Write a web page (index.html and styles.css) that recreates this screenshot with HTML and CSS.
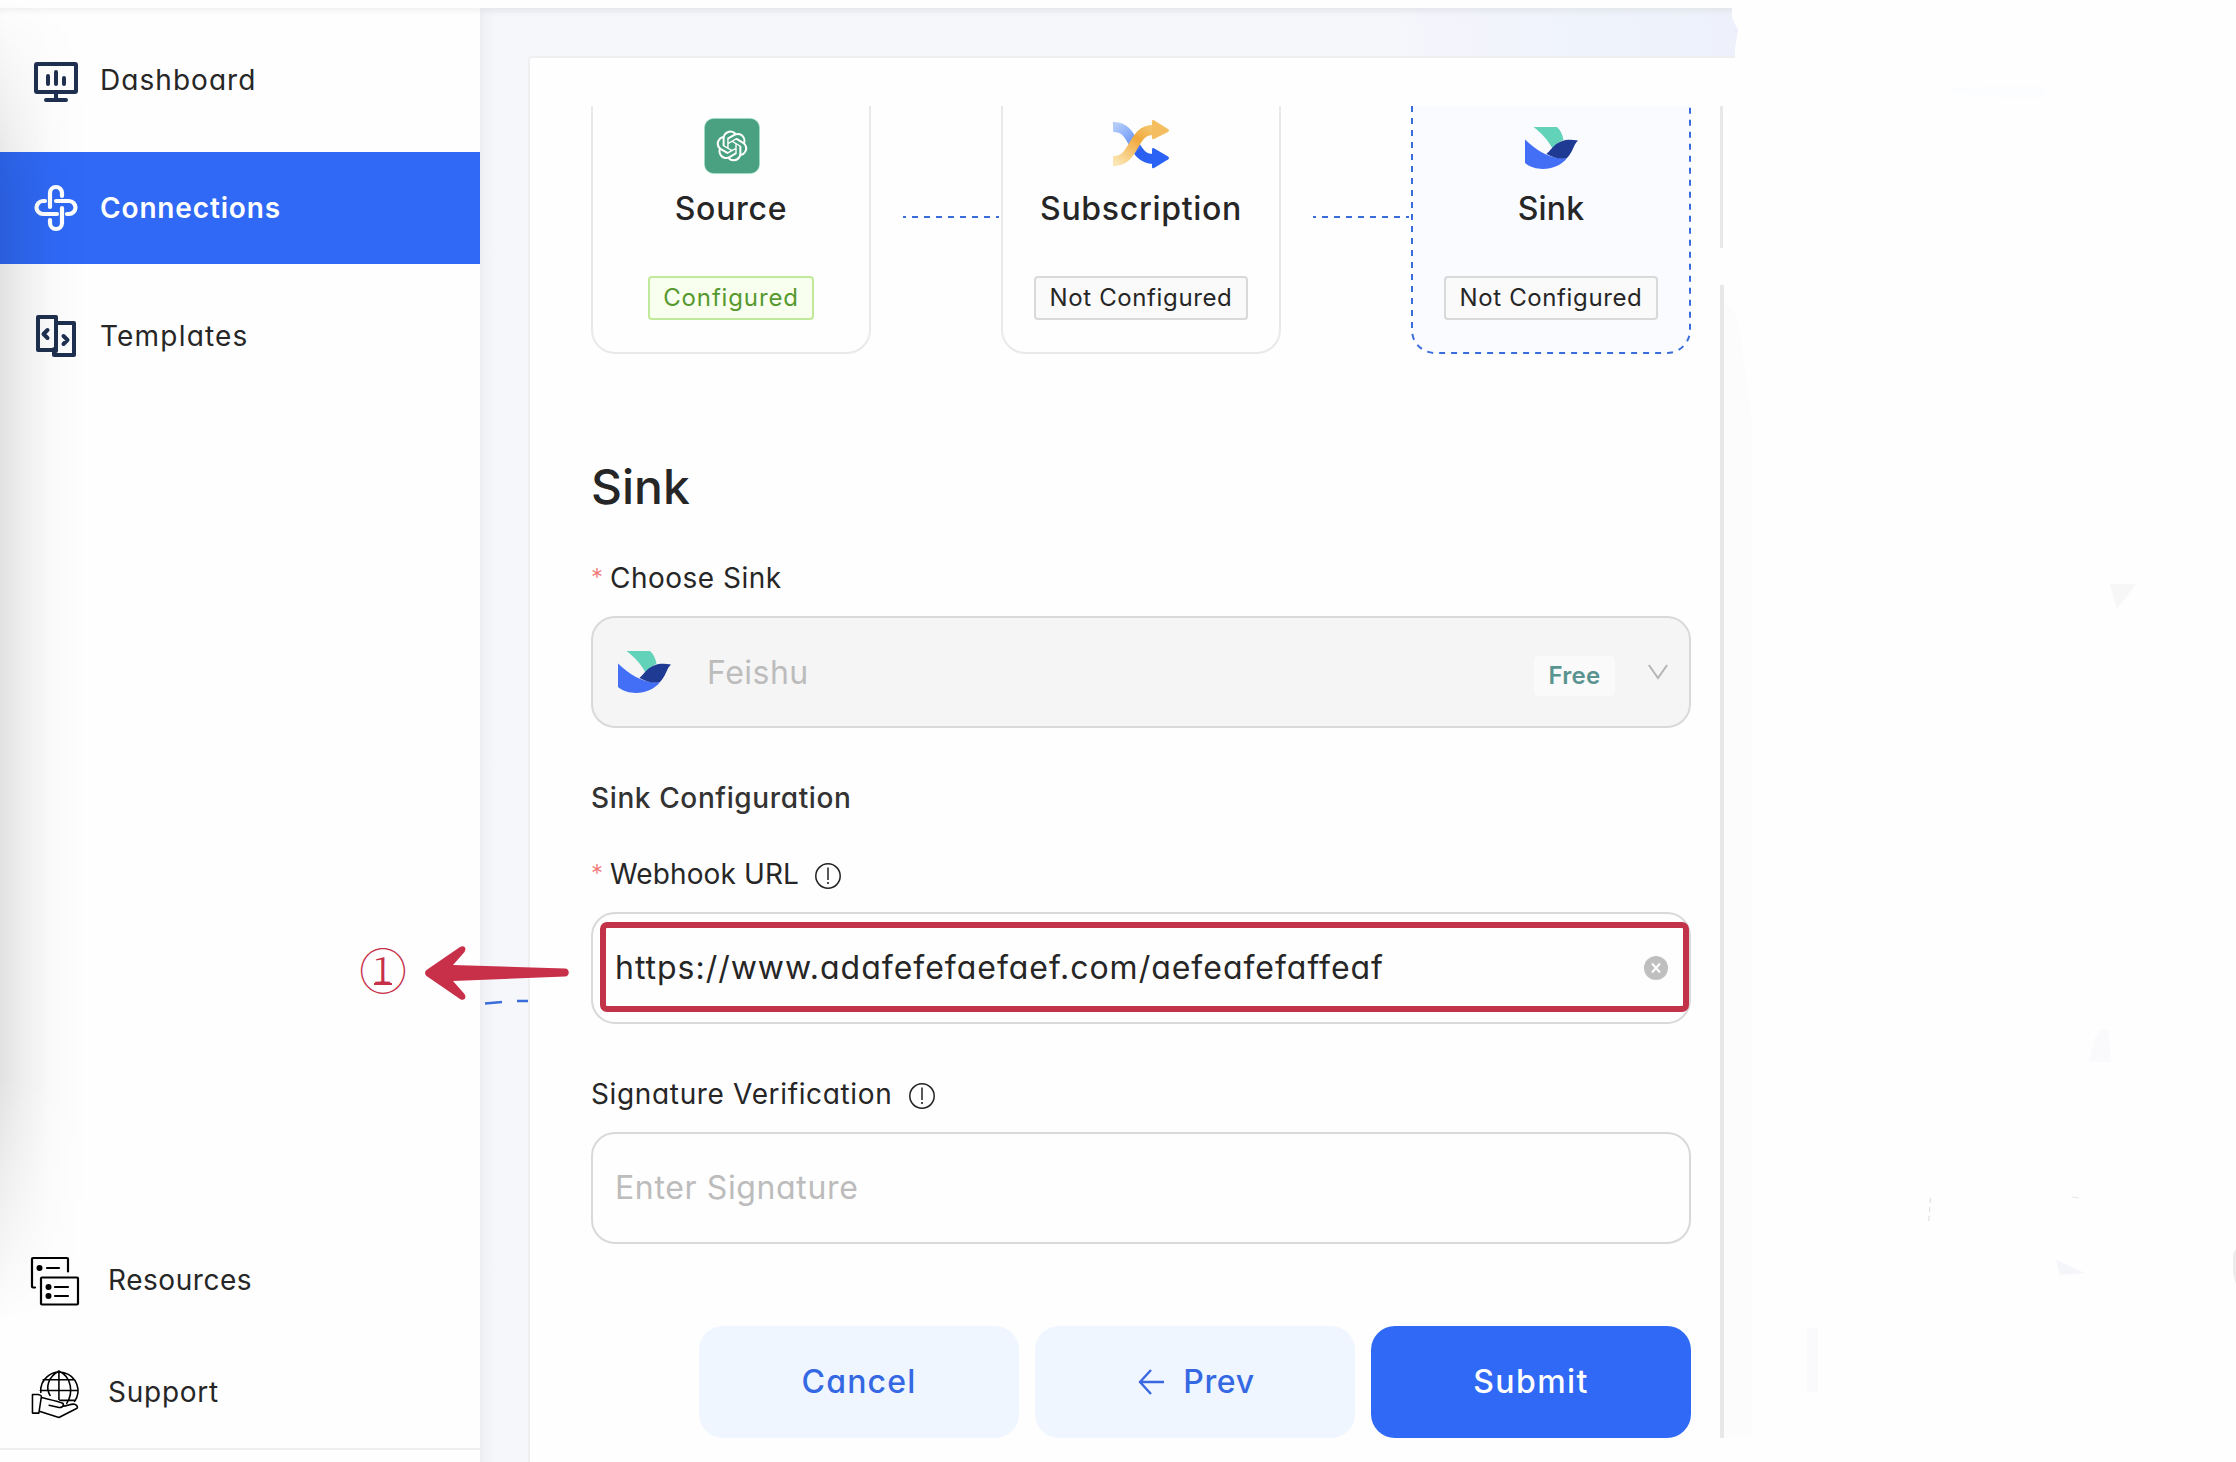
FILE: index.html
```html
<!DOCTYPE html>
<html lang="en">
<head>
<meta charset="utf-8">
<title>Connections</title>
<link rel="stylesheet" href="styles.css">
</head>
<body>
<svg class="defs" width="0" height="0">
  <symbol id="feishu" viewBox="0 0 53 42">
    <path fill="#62d2b9" d="M8.500 0H32c3.500 3 5.700 8 6.500 13C33 15 30 19 27.500 21.500 22.500 12.500 16.500 6 8.500 0z"/>
    <path fill="#426ff6" d="M0 12.500C12 24 26 33 42 31 34 42 13 46.500 0 36z"/>
    <path fill="#1f3a93" d="M21.500 27C29 20 33 10 53 13.500 48.500 17.500 48 25 42 31c-8 1.500-14-.5-20.500-4z"/>
  </symbol>
  <symbol id="info" viewBox="0 0 26 26">
    <circle cx="13" cy="13" r="12.200" fill="none" stroke="#222" stroke-width="1.500"/>
    <path d="M13 4.500v12.500" stroke="#222" stroke-width="1.500"/><circle cx="13" cy="20" r="1.100" fill="#222"/>
  </symbol>
</svg>
<div class="topbar"></div>
<div class="shell">
  <aside class="sidebar">
    <nav class="nav">
      <a class="nav-item"><svg class="nav-icon monitor" viewBox="0 0 44 48" fill="none" stroke="#1f3050" stroke-width="4" stroke-linecap="round" stroke-linejoin="round"><rect x="2" y="6" width="40" height="28" rx="1"/><path d="M14 18v8M22 14v12M30 20v6M22 34v8M12 42h20"/></svg><span class="t-dashboard">Dashboard</span></a>
      <a class="nav-item active"><svg class="nav-icon" viewBox="0 0 44 48" fill="none" stroke="#fff" stroke-width="4.200" stroke-linecap="round"><path d="M28 12V9a6 6 0 0 0-12 0v14M11 17H9a6.500 6.500 0 0 0 0 13h14M16 36v3a6 6 0 0 0 12 0V24M33 30h2a6.500 6.500 0 0 0 0-13H22"/></svg><span class="t-connections">Connections</span></a>
      <a class="nav-item"><svg class="nav-icon" viewBox="0 0 44 48" fill="none" stroke="#1f3050" stroke-width="4" stroke-linejoin="round" stroke-linecap="round"><path d="M20 38H4V5h18v34M22 11h18v32H20V37M13.500 18l-4 4 4 4M29.500 24l4 4-4 4"/></svg><span class="t-templates">Templates</span></a>
    </nav>
    <nav class="nav nav-bottom">
      <a class="nav-item"><svg class="nav-icon wide" viewBox="0 0 48 48" fill="none" stroke="#000" stroke-width="2.200" stroke-linecap="round" stroke-linejoin="round"><path d="M37 14V1.500q0-1-1-1H2q-1 0-1 1V29q0 1 1 1h2"/><rect x="10" y="20" width="37" height="27" rx="1"/><path d="M16 10.500h12M24 29.500h13M24 38.500h13"/><g fill="#000" stroke="none"><circle cx="8.500" cy="10.500" r="3"/><circle cx="17.500" cy="29.500" r="3"/><circle cx="17.500" cy="38.500" r="3"/></g></svg><span class="t-resources">Resources</span></a>
      <a class="nav-item"><svg class="nav-icon wide" viewBox="0 0 48 50" fill="none" stroke="#000" stroke-width="1.600" stroke-linecap="round" stroke-linejoin="round"><path d="M9.500 24A19 19 0 1 1 44 33M28 2v29M19 27C14 19 17 8 28 2M36 35C43 24 41 8 28 2M12 11h32M9 22h38M29 32h16"/><path d="M1 26h6q4 1 3 3L7.500 45H1zM10 29c8 2 18 4 22 6 2 3-2 5-5 4l-9-2M32 38c5 0 8-3 12-2q4 2 2.500 4L28 49.500 8 43"/></svg><span class="t-support">Support</span></a>
    </nav>
  </aside>
  <main class="page">
    <section class="panel">
      <div class="steps">
        <div class="step">
          <svg class="step-icon source" viewBox="0 0 56 56"><rect x=".5" y=".5" width="55" height="55" rx="9" fill="#4aa181" stroke="#9fe0c6" stroke-width=".6"/><g transform="translate(12.600 12.600) scale(1.280)"><path fill="#fff" d="M22.282 9.821a5.985 5.985 0 0 0-.516-4.910 6.046 6.046 0 0 0-6.510-2.900A6.065 6.065 0 0 0 4.981 4.182a5.985 5.985 0 0 0-3.998 2.900 6.046 6.046 0 0 0 .743 7.097 5.980 5.980 0 0 0 .510 4.911 6.051 6.051 0 0 0 6.515 2.900A5.985 5.985 0 0 0 13.260 24a6.056 6.056 0 0 0 5.772-4.206 5.990 5.990 0 0 0 3.998-2.900 6.056 6.056 0 0 0-.748-7.073zM13.260 22.430a4.476 4.476 0 0 1-2.876-1.041l.141-.080 4.779-2.759a.795.795 0 0 0 .393-.681v-6.737l2.020 1.169a.071.071 0 0 1 .038.052v5.583a4.504 4.504 0 0 1-4.495 4.494zM3.600 18.304a4.471 4.471 0 0 1-.535-3.014l.142.085 4.783 2.759a.771.771 0 0 0 .781 0l5.843-3.369v2.332a.080.080 0 0 1-.033.062L9.740 19.950a4.500 4.500 0 0 1-6.140-1.646zM2.341 7.896a4.485 4.485 0 0 1 2.366-1.973V11.600a.766.766 0 0 0 .388.677l5.815 3.354-2.020 1.169a.076.076 0 0 1-.071 0l-4.830-2.787A4.504 4.504 0 0 1 2.341 7.872zm16.597 3.855l-5.833-3.387L15.119 7.200a.076.076 0 0 1 .071 0l4.830 2.791a4.494 4.494 0 0 1-.676 8.105v-5.678a.790.790 0 0 0-.407-.667zm2.010-3.023l-.141-.085-4.774-2.782a.776.776 0 0 0-.785 0L9.409 9.230V6.897a.066.066 0 0 1 .028-.061l4.830-2.787a4.499 4.499 0 0 1 6.680 4.660zm-12.640 4.135l-2.020-1.164a.080.080 0 0 1-.038-.057V6.075a4.499 4.499 0 0 1 7.375-3.453l-.142.080L8.704 5.460a.795.795 0 0 0-.393.681zm1.097-2.365l2.602-1.500 2.607 1.500v2.999l-2.597 1.500-2.607-1.500z"/></g></svg>
          <h3>Source</h3><span class="tag ok"><span>Configured</span></span>
        </div>
        <div class="link"></div>
        <div class="step">
          <svg class="step-icon" viewBox="0 0 56 56"><defs><linearGradient id="b" x1="0" y1="0" x2="1" y2="1"><stop offset="0" stop-color="#b3ccfa"/><stop offset=".5" stop-color="#6c97f8"/><stop offset=".7" stop-color="#2a5ff0"/><stop offset="1" stop-color="#2a62f5"/></linearGradient><linearGradient id="y" x1="0" y1="1" x2="1" y2="0"><stop offset="0" stop-color="#fbe6b4"/><stop offset=".65" stop-color="#f1a93c"/><stop offset="1" stop-color="#f4c46c"/></linearGradient></defs><path d="M0 9C23 8 18 42 41 41" fill="none" stroke="url(#b)" stroke-width="10"/><path d="M39 31.500q0-2 2-1.200L55 38.500q2 1.500 0 3L41 50q-2 .8-2-1z" fill="#2a62f5"/><path d="M0 43C23 44 18 11 41 12" fill="none" stroke="url(#y)" stroke-width="10"/><path d="M39 3.500q0-2 2-1.200L55 11q2 1.500 0 3L41 21q-2 .8-2-1z" fill="#f4be60"/></svg>
          <h3>Subscription</h3><span class="tag"><span>Not Configured</span></span>
        </div>
        <div class="link"></div>
        <div class="step current">
          <svg class="dash" viewBox="0 0 280 248"><path d="M1 0V224a23 23 0 0 0 23 23H256a23 23 0 0 0 23-23V0" fill="#f9fbff" stroke="#3a6ddc" stroke-width="2" stroke-dasharray="6 6"/></svg>
          <svg class="step-icon sink"><use href="#feishu"/></svg>
          <h3 class="t-sink">Sink</h3><span class="tag"><span>Not Configured</span></span>
        </div>
      </div>
      <h1>Sink</h1>
      <div class="label"><i class="req">*</i><span class="t-choose">Choose Sink</span></div>
      <div class="field select"><svg class="brand"><use href="#feishu"/></svg><span class="ph">Feishu</span><span class="free">Free</span><svg class="chev" viewBox="0 0 20 16"><path d="M.8 1L10 14 19.200 1" fill="none" stroke="#b5b5b5" stroke-width="2"/></svg></div>
      <h2>Sink Configuration</h2>
      <div class="label second"><i class="req">*</i><span class="t-webhook">Webhook URL</span><svg class="info"><use href="#info"/></svg></div>
      <div class="field url"><span class="t-url">https://www.adafefefaefaef.com/aefeafefaffeaf</span><svg class="clear" viewBox="0 0 24 24"><circle cx="12" cy="12" r="12" fill="#bfbfbf"/><path d="M8 7.500l8 9M16 7.500l-8 9" stroke="#fff" stroke-width="2"/></svg><div class="marker"></div></div>
      <div class="label third"><span class="t-signature">Signature Verification</span><svg class="info"><use href="#info"/></svg></div>
      <div class="field"><span class="ph t-enter">Enter Signature</span></div>
      <div class="actions">
        <button><span class="t-cancel">Cancel</span></button>
        <button><svg class="back" viewBox="0 0 26 26"><path d="M13 1L2 13l11 12M2 13h24" fill="none" stroke="#3a68e0" stroke-width="2.400"/></svg><span class="t-prev">Prev</span></button>
        <button class="primary"><span class="t-submit">Submit</span></button>
      </div>
      <div class="rail"><i class="rail-top"></i><i class="rail-rest"></i></div>
    </section>
  </main>
</div>
<div class="edge-shadow"></div>
<div class="callout">①</div>
<svg class="arrow" viewBox="0 0 230 70"><path d="M1.500 30q-3-3 0-6L35 1c4-2.500 7 1 4.500 5L28 19l112 3.500c5 0 5 8 0 8L28 35l11.500 13c2.500 4-.5 7.500-4.500 5z" fill="#c8304a"/><path d="M60 57.500l17-1.500M92 55h11" stroke="#3a6ddc" stroke-width="2.400" fill="none"/></svg>
<svg class="specks" viewBox="0 0 536 1462"><path d="M24 1437V300l14 20 14 100v1017z" fill="#fcfcfc"/><path d="M240 90l40-4h65v12h-45z" fill="#fcfdff"/><path d="M410 584h26l-19 25z" fill="#f7f7f8"/><path d="M389 1060l6-22q6-14 14-6l2 30h-20z" fill="#fafafd"/><path d="M107 1328h11v64h-11z" fill="#fafafc"/><path d="M230.500 1198l-2 26" stroke="#dcdcdc" stroke-dasharray="5 4"/><path d="M372 1197l7 1" stroke="#e8e8e8"/><path d="M356 1260l29 13-25 2z" fill="#f4f6fa"/><path d="M536 1249l-3 5v20l3 10z" fill="#ececec"/></svg>
</body>
</html>
```

FILE: styles.css
```css
* { box-sizing: border-box; margin: 0; padding: 0; }
body { width: 2236px; height: 1462px; overflow: hidden; position: relative; background: #fefefe; color: #262626; font: 400 28px/42px Inter, "Liberation Sans", sans-serif; font-feature-settings: "cv11", "ss03"; }
h1, h2, h3 { font-weight: 500; }
.defs { position: absolute; }
.topbar { height: 8px; background: #fefefe; }
.shell { display: flex; height: 1454px; }
.sidebar { width: 480px; display: flex; flex-direction: column; justify-content: space-between; background: #fefefe; box-shadow: inset 0 6px 6px -4px #eee; padding-top: 16px; }
.nav { display: flex; flex-direction: column; gap: 16px; }
.nav-item { display: flex; align-items: center; height: 112px; padding-left: 34px; gap: 22px; }
.nav-icon { width: 44px; height: 48px; }
.nav-icon.monitor { margin-top: 3px; }
.nav-item.active { background: #2f69f6; color: #fff; font-weight: 600; }
.nav-bottom { gap: 0; height: 238px; background: linear-gradient(#efefef, #efefef) 0 224px / 100% 2px no-repeat; }
.nav-bottom .nav-item { padding-left: 32px; gap: 28px; }
.nav-icon.wide { width: 48px; height: 49px; margin: 3px 1px 0 -1px; overflow: visible; }
.t-dashboard { letter-spacing: 1.05px; }
.t-connections { letter-spacing: .85px; }
.t-templates { letter-spacing: 1.2px; }
.t-resources { letter-spacing: .55px; }
.t-support { letter-spacing: .75px; }
.page { width: 1258px; padding: 48px 0 0 48px; background: linear-gradient(90deg, #efeff2 0, #f2f3f7 6px, #f5f7fb 16px, #f5f7fb 73%, #f4f4fc 77%, #eff3fc 87%, #eef1fb); clip-path: polygon(0 0, 1252px 0, 1252px 10px, 1258px 22px, 1255px 40px, 1255px 50px, 1258px 60px, 1258px 100%, 0 100%); box-shadow: inset 0 6px 6px -3px #e2e4ea; }
.panel { position: relative; height: 1406px; background: #fefefe; border: 2px solid #efeff1; border-right: 0; border-bottom: 0; border-radius: 4px 0 0 0; padding: 48px 47px 0 61px; }
.steps { display: flex; height: 248px; }
.step { position: relative; width: 280px; display: flex; flex-direction: column; align-items: center; border: 2px solid #e9e9e9; border-top: 0; border-radius: 0 0 24px 24px; }
.step.current { border-color: transparent; }
.dash { position: absolute; left: -2px; top: 0; width: 280px; height: 248px; }
.step-icon { position: relative; width: 56px; height: 56px; margin-top: 12px; }
.step-icon.source { margin-left: 2px; }
.step-icon.sink { width: 53px; height: 42px; margin: 21px 0 5px; }
.step h3 { position: relative; font-size: 32px; line-height: 48px; margin-top: 11px; letter-spacing: .7px; }
.step h3.t-sink { letter-spacing: .2px; }
.tag { position: relative; height: 44px; width: 214px; margin-top: 43px; display: flex; align-items: center; justify-content: center; border: 2px solid #d9d9d9; border-radius: 4px; background: #fafafa; font-size: 24px; letter-spacing: .62px; }
.tag.ok { width: 166px; color: #56992f; background: #f9ffef; border-color: #c0ea99; letter-spacing: .85px; }
.link { width: 96px; height: 2px; margin: 110px 2px 0 32px; background: repeating-linear-gradient(90deg, #3a6ddc 0 6px, transparent 6px 12px) -3px 0; }
h1 { font-size: 48px; line-height: 64px; margin-top: 101px; }
.label { display: flex; align-items: center; height: 42px; margin: 38px 0 17px; }
.req { width: 19px; color: #f07673; font: 300 24px/42px Inter, sans-serif; }
.info { width: 26px; height: 26px; margin: 3px 0 0 17px; }
.second .info { margin-left: 16px; }
.field { position: relative; width: 1100px; height: 112px; display: flex; align-items: center; border: 2px solid #d9d9d9; border-radius: 24px; padding: 0 22px; font-size: 32px; background: #fefefe; }
.select { background: #f5f5f5; padding-left: 25px; }
.brand { width: 53px; height: 42px; }
.ph { color: #bcbcbc; }
.select .ph { margin: 1px 0 0 36px; letter-spacing: .5px; }
.free { margin: 8px 0 0 auto; width: 81px; height: 40px; display: flex; align-items: center; justify-content: center; border-radius: 5px; background: #fafafa; color: #5a9490; font-size: 24px; font-weight: 600; letter-spacing: .3px; }
.chev { width: 20px; height: 16px; margin: 0 -1px 0 33px; }
h2 { font-size: 28px; line-height: 42px; margin-top: 49px; color: #333; letter-spacing: .62px; }
.t-choose { letter-spacing: .5px; }
.label.second { margin: 34px 0 17px; }
.t-webhook { letter-spacing: .12px; }
.t-url { letter-spacing: .98px; }
.label.third { margin: 49px 0 17px; }
.t-signature { letter-spacing: .65px; }
.t-enter { letter-spacing: .63px; }
.url { padding-right: 21px; }
.clear { width: 24px; height: 24px; margin-left: auto; }
.marker { position: absolute; left: 7px; top: 8px; width: 1089px; height: 90px; border: 6px solid #c23249; border-radius: 7px; }
.actions { display: flex; gap: 16px; margin: 82px 0 0 108px; }
button { width: 320px; height: 112px; display: flex; align-items: center; justify-content: center; border: 0; border-radius: 24px; background: #f0f6ff; color: #3568e3; font: 500 32px/48px Inter, sans-serif; font-feature-settings: inherit; }
.t-cancel { letter-spacing: 1.2px; }
.t-prev { letter-spacing: .6px; }
.t-submit { letter-spacing: 1.4px; }
.primary { background: #2f69f6; color: #fff; }
.back { width: 26px; height: 26px; margin: 0 19px 0 3px; }
.rail { position: absolute; left: 1190px; top: 48px; width: 4px; height: 1332px; display: flex; flex-direction: column; justify-content: space-between; }
.rail-top { height: 142px; width: 3px; background: #e8e8e8; }
.rail-rest { height: 1153px; background: #e8e8e8; }
.edge-shadow { position: absolute; left: 0; top: 0; width: 86px; height: 1320px; background: linear-gradient(90deg, rgba(0,0,0,.11), rgba(0,0,0,.07) 22%, rgba(0,0,0,.02) 58%, transparent); -webkit-mask-image: linear-gradient(transparent, #000 200px, #000 1080px, transparent); mask-image: linear-gradient(transparent, #000 200px, #000 1080px, transparent); }
.callout { position: absolute; left: 359px; top: 939px; width: 50px; color: #c8304a; font: 300 48px/60px "Noto Serif CJK SC", "Noto Sans CJK SC", sans-serif; }
.callout::after { content: ""; position: absolute; left: 15px; top: 44px; width: 18px; height: 2px; background: #c8304a; }
.arrow { position: absolute; left: 425px; top: 946px; width: 230px; height: 70px; }
.specks { position: absolute; left: 1700px; top: 0; width: 536px; height: 1462px; }
```
